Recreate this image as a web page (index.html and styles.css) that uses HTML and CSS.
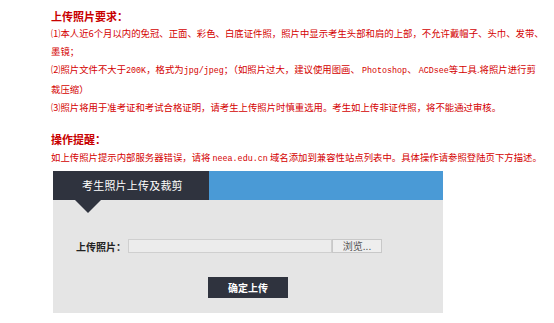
FILE: index.html
```html
<!DOCTYPE html>
<html lang="zh-CN">
<head>
  <meta charset="UTF-8" />
  <title>上传照片</title>
  <link rel="stylesheet" href="styles.css">
</head>
<body>
  <div class="notes">
    <h2>上传照片要求：</h2>
    <p>⑴本人近6个月以内的免冠、正面、彩色、白底证件照，照片中显示考生头部和肩的上部，不允许戴帽子、头巾、发带、<br>墨镜；</p>
    <p>⑵照片文件不大于<span class="en">200K</span>，格式为<span class="en">jpg/jpeg</span>；（如照片过大，建议使用图画、 <span class="en">Photoshop</span>、 <span class="en">ACDsee</span>等工具.将照片进行剪<br>裁压缩）</p>
    <p>⑶照片将用于准考证和考试合格证明，请考生上传照片时慎重选用。考生如上传非证件照，将不能通过审核。</p>

    <h2 class="tip">操作提醒：</h2>
    <p>如上传照片提示内部服务器错误，请将 <span class="en">neea.edu.cn</span> 域名添加到兼容性站点列表中。具体操作请参照登陆页下方描述。</p>
  </div>

  <div class="panel">
    <div class="panel-head">
      <div class="tab">考生照片上传及裁剪</div>
    </div>
    <div class="panel-body">
      <div class="upload-row">
        <span class="label">上传照片：</span>
        <span class="file-box"></span>
        <button class="browse">浏览...</button>
      </div>
      <button class="submit">确定上传</button>
    </div>
  </div>
</body>
</html>
```

FILE: styles.css
```css
body {
  margin: 0;
  background: #ffffff;
  font-family: "Noto Sans CJK SC", "Liberation Sans", sans-serif;
}

.notes {
  padding: 8px 0 0 51px;
  color: #d40000;
}

.notes h2 {
  margin: 0;
  font-size: 11px;
  line-height: 16px;
  font-weight: bold;
  color: #c80000;
}

.notes p {
  margin: 0;
  font-size: 9.4px;
  line-height: 18px;
  white-space: nowrap;
}

.notes .en {
  font-family: "Liberation Mono", monospace;
  font-size: 8.4px;
}

.notes h2.tip {
  margin-top: 15px;
  margin-bottom: 1px;
}

.panel {
  width: 390px;
  margin: 3px 0 0 53px;
}

.panel-head {
  height: 29px;
  background: #4a9ad6;
  display: flex;
}

.tab {
  position: relative;
  width: 156px;
  background: #2f333e;
  color: #ffffff;
  font-size: 11px;
  line-height: 29px;
  padding-left: 29px;
  box-sizing: border-box;
  letter-spacing: 0.2px;
}

.tab::after {
  content: "";
  position: absolute;
  left: 22px;
  top: 29px;
  border-left: 13px solid transparent;
  border-right: 13px solid transparent;
  border-top: 13px solid #2f333e;
}

.panel-body {
  height: 113px;
  background: #e5e5e5;
  padding: 39px 0 0 23px;
  box-sizing: border-box;
}

.upload-row {
  display: flex;
  align-items: center;
  height: 14px;
}

.label {
  width: 52px;
  font-size: 10px;
  font-weight: bold;
  color: #222222;
}

.file-box {
  width: 204px;
  height: 14px;
  box-sizing: border-box;
  background: #ececec;
  border: 1px solid #cfcfcf;
}

.browse {
  width: 50px;
  height: 14px;
  padding: 0;
  box-sizing: border-box;
  background: #eeeeee;
  border: 1px solid #c8c8c8;
  color: #555555;
  font-family: inherit;
  font-size: 10px;
  line-height: 12px;
}

.submit {
  display: block;
  width: 80px;
  height: 21px;
  margin: 24px 0 0 132px;
  padding: 0;
  background: #2f333e;
  border: none;
  color: #ffffff;
  font-family: inherit;
  font-size: 10px;
  font-weight: bold;
}
```
